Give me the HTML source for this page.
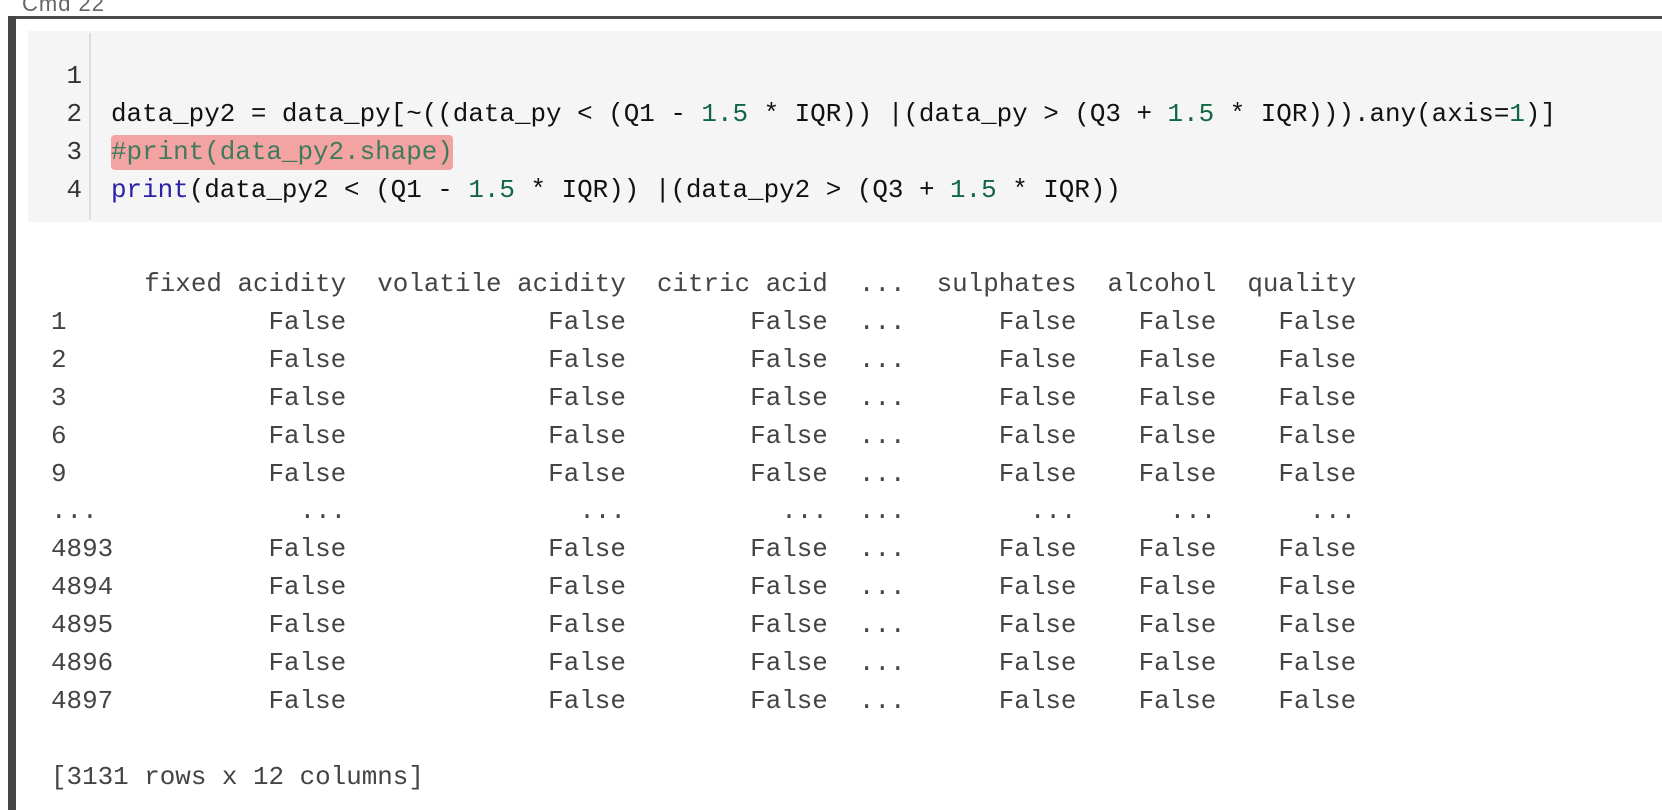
<!DOCTYPE html>
<html><head><meta charset="utf-8"><style>
html,body{margin:0;padding:0;background:#fff;width:1662px;height:810px;overflow:hidden;position:relative;font-family:"Liberation Mono",monospace;}
.cmd{position:absolute;left:22px;top:-9px;font:22px "Liberation Sans",sans-serif;color:#666;letter-spacing:1px}
.btop{position:absolute;left:8px;top:16px;right:0;height:3px;background:#4a4a4a;border-top-left-radius:4px}
.bleft{position:absolute;left:8px;top:16px;width:8px;height:800px;background:#444}
.code{position:absolute;left:28px;top:31px;right:0;height:191px;background:#f5f5f5}
.gut{position:absolute;left:89px;top:33px;width:2px;height:187px;background:#ddd}
.ln{position:absolute;left:40px;width:42px;text-align:right;font-size:25.9px;line-height:38px;color:#333}
.cl{position:absolute;left:111px;font-size:25.9px;line-height:38px;color:#111;white-space:pre}
.n{color:#116644}.k{color:#2a1fa6}.c{color:#3e7b5c;background:#f4a3a3;border-radius:4px;padding:2px 0 3px}
pre{position:absolute;left:51px;top:266px;margin:0;font-family:"Liberation Mono",monospace;font-size:25.9px;line-height:37.9px;color:#444}
</style></head><body>
<div class="cmd">Cmd 22</div>
<div class="code"></div>
<div class="gut"></div>
<div class="btop"></div>
<div class="bleft"></div>
<div class="ln" style="top:57px">1</div>
<div class="ln" style="top:95px">2</div>
<div class="ln" style="top:133px">3</div>
<div class="ln" style="top:171px">4</div>
<div class="cl" style="top:95px">data_py2 = data_py[~((data_py &lt; (Q1 - <span class="n">1.5</span> * IQR)) |(data_py &gt; (Q3 + <span class="n">1.5</span> * IQR))).any(axis=<span class="n">1</span>)]</div>
<div class="cl" style="top:133px"><span class="c">#print(data_py2.shape)</span></div>
<div class="cl" style="top:171px"><span class="k">print</span>(data_py2 &lt; (Q1 - <span class="n">1.5</span> * IQR)) |(data_py2 &gt; (Q3 + <span class="n">1.5</span> * IQR))</div>
<pre>      fixed acidity  volatile acidity  citric acid  ...  sulphates  alcohol  quality
1             False             False        False  ...      False    False    False
2             False             False        False  ...      False    False    False
3             False             False        False  ...      False    False    False
6             False             False        False  ...      False    False    False
9             False             False        False  ...      False    False    False
...             ...               ...          ...  ...        ...      ...      ...
4893          False             False        False  ...      False    False    False
4894          False             False        False  ...      False    False    False
4895          False             False        False  ...      False    False    False
4896          False             False        False  ...      False    False    False
4897          False             False        False  ...      False    False    False

[3131 rows x 12 columns]</pre>
</body></html>
